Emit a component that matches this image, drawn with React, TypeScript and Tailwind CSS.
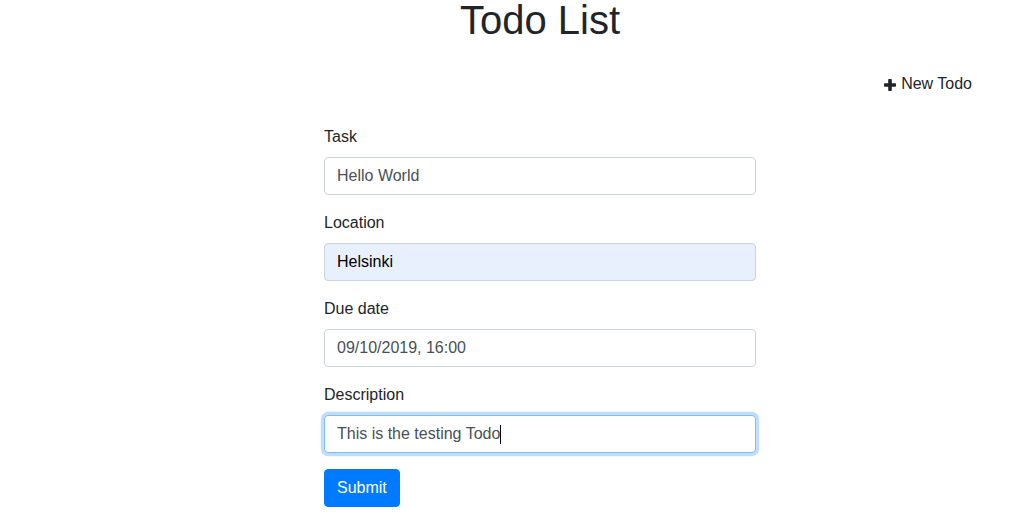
export default function App() {
  const font = { fontFamily: '"Liberation Sans", Arial, sans-serif' };
  const inputCls =
    "block w-full h-[38px] px-3 py-1.5 text-base leading-6 text-[#495057] bg-white border border-[#ced4da] rounded outline-none";

  return (
    <div className="w-full min-h-screen overflow-hidden bg-white text-[#212529]" style={font}>
      <div className="w-[1080px]">
        <h1 className="text-center text-[40px] leading-[40px] font-medium">Todo List</h1>

        <div className="flex justify-end pr-[108px] mt-8">
          <button className="flex items-center gap-[5px] text-base leading-6 text-[#212529]">
            <svg width="12" height="12" viewBox="0 0 12 12" className="mt-px">
              <rect x="4.2" y="0" width="3.6" height="12" rx="0.8" fill="#212529" />
              <rect x="0" y="4.2" width="12" height="3.6" rx="0.8" fill="#212529" />
            </svg>
            New Todo
          </button>
        </div>

        <form className="w-[432px] mx-auto mt-[29px]">
          <div className="mb-4">
            <label className="block mb-2 text-base leading-6">Task</label>
            <input className={inputCls} defaultValue="Hello World" readOnly />
          </div>

          <div className="mb-4">
            <label className="block mb-2 text-base leading-6">Location</label>
            <input
              className="block w-full h-[38px] px-3 py-1.5 text-base leading-6 text-black bg-[#e8f0fe] border border-[#ced4da] rounded outline-none"
              defaultValue="Helsinki"
              readOnly
            />
          </div>

          <div className="mb-4">
            <label className="block mb-2 text-base leading-6">Due date</label>
            <input className={inputCls} defaultValue="09/10/2019, 16:00" readOnly />
          </div>

          <div className="mb-4">
            <label className="block mb-2 text-base leading-6">Description</label>
            <div className="flex items-center h-[38px] px-3 text-base leading-6 text-[#495057] bg-white border border-[#80bdff] rounded shadow-[0_0_0_3.2px_rgba(0,123,255,0.25)]">
              <span>This is the testing Todo</span>
              <span className="inline-block w-px h-[19px] bg-black" />
            </div>
          </div>

          <button
            type="button"
            className="h-[38px] px-3 text-base leading-6 text-white bg-[#007bff] border border-[#007bff] rounded"
          >
            Submit
          </button>
        </form>
      </div>
    </div>
  );
}
